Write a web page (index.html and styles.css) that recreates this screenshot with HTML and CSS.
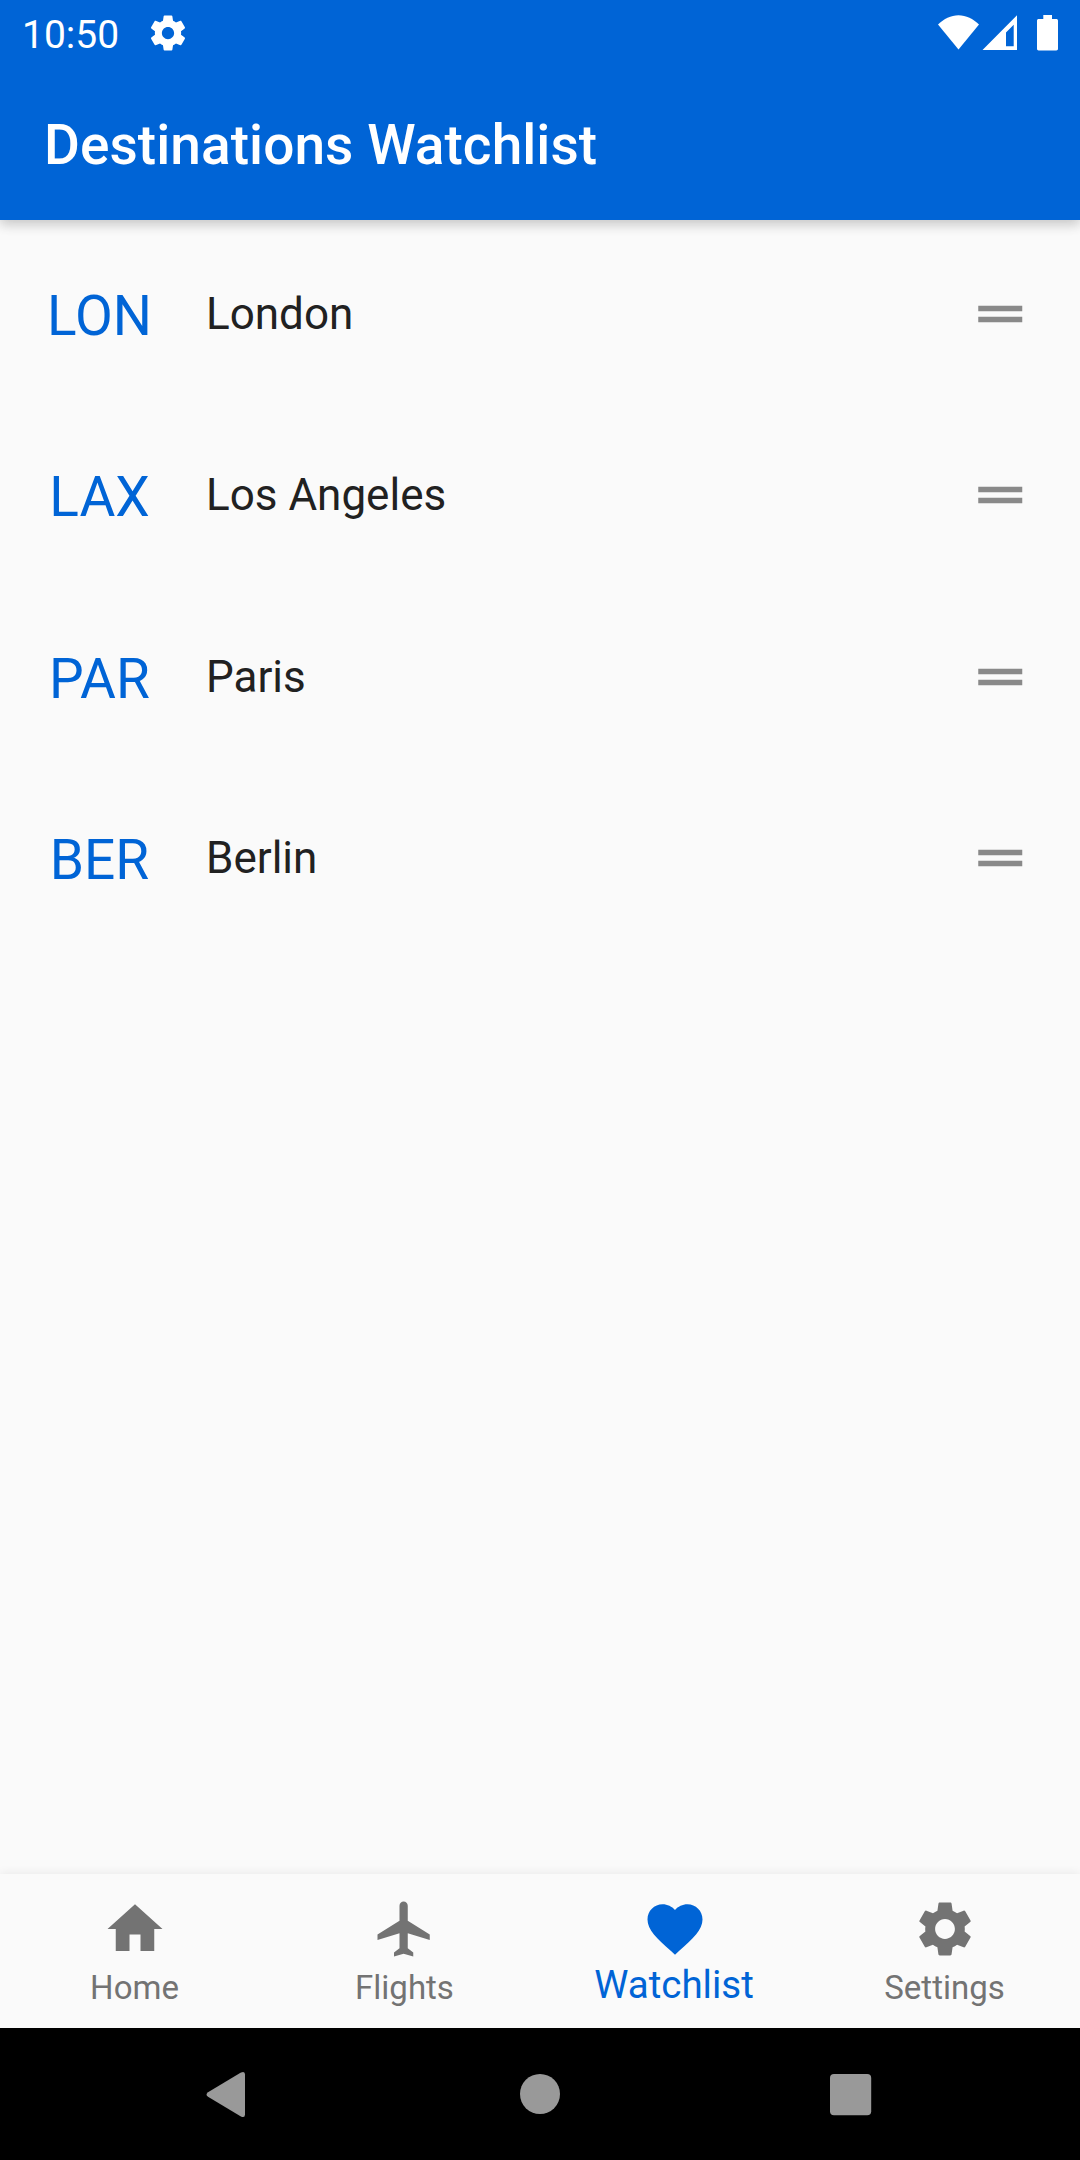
FILE: index.html
```html
<!DOCTYPE html>
<html lang="en">
<head>
<meta charset="utf-8">
<title>Destinations Watchlist</title>
<link rel="stylesheet" href="styles.css">
</head>
<body>
<div class="screen">
  <header class="header">
    <div class="status">
      <span class="time">10:50</span>
      <svg class="status-gear" viewBox="0 0 24 24"><path d="M19.43 12.98c.04-.32.07-.64.07-.98s-.03-.66-.07-.98l2.11-1.65c.19-.15.24-.42.12-.64l-2-3.46c-.12-.22-.39-.3-.61-.22l-2.49 1c-.52-.4-1.08-.73-1.69-.98l-.38-2.65C14.46 2.18 14.25 2 14 2h-4c-.25 0-.46.18-.49.42l-.38 2.65c-.61.25-1.17.59-1.69.98l-2.49-1c-.23-.09-.49 0-.61.22l-2 3.46c-.13.22-.07.49.12.64l2.11 1.65c-.04.32-.07.65-.07.98s.03.66.07.98l-2.11 1.65c-.19.15-.24.42-.12.64l2 3.46c.12.22.39.3.61.22l2.49-1c.52.4 1.08.73 1.69.98l.38 2.65c.03.24.24.42.49.42h4c.25 0 .46-.18.49-.42l.38-2.65c.61-.25 1.17-.59 1.69-.98l2.49 1c.23.09.49 0 .61-.22l2-3.46c.12-.22.07-.49-.12-.64l-2.11-1.65zM12 15.5c-1.93 0-3.5-1.57-3.5-3.5s1.57-3.5 3.5-3.5 3.5 1.57 3.5 3.5-1.57 3.5-3.5 3.5z"/></svg>
      <svg class="indicators" viewBox="0 0 120 36">
        <path d="M20.5 34.5 0 9.5C5.8 3.8 13 .2 20.5 .2S35.2 3.8 41 9.5z"/>
        <path fill-rule="evenodd" d="M44.5 35 79 .3V35zM68 17.5V31.3h7.7V9.7z"/>
        <path d="M105.3 0h8.7v4h4.3c1 0 1.7.7 1.7 1.7v28.1c0 1-.7 1.7-1.7 1.7h-17.6c-1 0-1.7-.7-1.7-1.7V5.7c0-1 .7-1.7 1.7-1.7h4.6z"/>
      </svg>
    </div>
    <h1 class="title">Destinations Watchlist</h1>
  </header>

  <main class="list">
    <div class="row"><span class="code">LON</span><span class="city">London</span><svg class="handle" viewBox="0 0 66 66"><path d="M11.25 24.75h44v5.5h-44zM11.25 35.75h44v5.5h-44z"/></svg></div>
    <div class="row"><span class="code">LAX</span><span class="city">Los Angeles</span><svg class="handle" viewBox="0 0 66 66"><path d="M11.25 24.75h44v5.5h-44zM11.25 35.75h44v5.5h-44z"/></svg></div>
    <div class="row"><span class="code">PAR</span><span class="city">Paris</span><svg class="handle" viewBox="0 0 66 66"><path d="M11.25 24.75h44v5.5h-44zM11.25 35.75h44v5.5h-44z"/></svg></div>
    <div class="row"><span class="code">BER</span><span class="city">Berlin</span><svg class="handle" viewBox="0 0 66 66"><path d="M11.25 24.75h44v5.5h-44zM11.25 35.75h44v5.5h-44z"/></svg></div>
  </main>

  <nav class="tabs">
    <div class="tab"><svg class="tab-icon" viewBox="0 0 24 24"><path d="M10 20v-6h4v6h5v-8h3L12 3 2 12h3v8z"/></svg><span class="label">Home</span></div>
    <div class="tab"><svg class="tab-icon" viewBox="0 0 24 24"><path d="M21 16v-2l-8-5V3.5c0-.83-.67-1.5-1.5-1.5S10 2.67 10 3.5V9l-8 5v2l8-2.5V19l-2 1.5V22l3.5-1 3.5 1v-1.5L13 19v-5.5l8 2.5z"/></svg><span class="label">Flights</span></div>
    <div class="tab active"><svg class="tab-icon" viewBox="0 0 24 24"><path d="M12 21.35l-1.45-1.32C5.4 15.36 2 12.28 2 8.5 2 5.42 4.42 3 7.5 3c1.74 0 3.41.81 4.5 2.09C13.09 3.81 14.76 3 16.5 3 19.58 3 22 5.42 22 8.5c0 3.78-3.4 6.86-8.55 11.54L12 21.35z"/></svg><span class="label">Watchlist</span></div>
    <div class="tab"><svg class="tab-icon" viewBox="0 0 24 24"><path d="M19.14 12.94c.04-.3.06-.61.06-.94 0-.32-.02-.64-.07-.94l2.03-1.58c.18-.14.23-.41.12-.61l-1.92-3.32c-.12-.22-.37-.29-.59-.22l-2.39.96c-.5-.38-1.03-.7-1.62-.94l-.36-2.54c-.04-.24-.24-.41-.48-.41h-3.84c-.24 0-.43.17-.47.41l-.36 2.54c-.59.24-1.13.57-1.62.94l-2.39-.96c-.22-.08-.47 0-.59.22L2.74 8.87c-.12.21-.08.47.12.61l2.03 1.58c-.05.3-.09.63-.09.94s.02.64.07.94l-2.03 1.58c-.18.14-.23.41-.12.61l1.92 3.32c.12.22.37.29.59.22l2.39-.96c.5.38 1.03.7 1.62.94l.36 2.54c.05.24.24.41.48.41h3.84c.24 0 .44-.17.47-.41l.36-2.54c.59-.24 1.13-.56 1.62-.94l2.39.96c.22.08.47 0 .59-.22l1.92-3.32c.12-.22.07-.47-.12-.61l-2.01-1.58zM12 15.6c-1.98 0-3.6-1.62-3.6-3.6s1.62-3.6 3.6-3.6 3.6 1.62 3.6 3.6-1.62 3.6-3.6 3.6z"/></svg><span class="label">Settings</span></div>
  </nav>

  <footer class="sysnav">
    <svg viewBox="0 0 80 80"><path d="M18 40.2 Q15 42.5 18 44.8 L50.5 64.2 Q55 66.5 55 62.5 V22.5 Q55 18.500 50.5 20.8Z"/></svg>
    <svg viewBox="0 0 80 80"><circle cx="40" cy="42" r="20"/></svg>
    <svg viewBox="0 0 80 80"><rect x="19" y="22" width="41.200" height="41.200" rx="4"/></svg>
  </footer>
</div>
</body>
</html>
```
FILE: styles.css
```css
* { box-sizing: border-box; }
body { margin: 0; font-family: Roboto, "Liberation Sans", sans-serif; }
svg { display: block; flex: none; fill: currentColor; }
.screen { width: 1080px; height: 2160px; display: flex; flex-direction: column; background: #fafafa; overflow: hidden; }

.header { height: 220px; background: #0064d6; color: #fff; box-shadow: 0 5px 11px rgba(0,0,0,.13), 0 2px 14px rgba(0,0,0,.11); }
.status { height: 66px; padding: 0 22px; display: flex; align-items: center; }
.time { width: 125px; font-size: 39px; line-height: 46px; padding-top: 3px; }
.status-gear { width: 42px; height: 42px; }
.indicators { width: 120px; height: 36px; margin-left: auto; }
.title { margin: 0; padding: 2px 44px 0; font-size: 55px; font-weight: 500; line-height: 154px; letter-spacing: .06px; }

.list { flex: 1; padding: 3px 47px 0 44px; }
.row { height: 181.5px; display: flex; align-items: center; }
.code { width: 110px; padding: 4px 0 0 1px; font-size: 55px; line-height: 64px; color: #0064d6; text-align: center; }
.city { flex: 1; margin-left: 52px; font-size: 44px; line-height: 52px; color: #212121; }
.handle { width: 66px; height: 66px; color: #898989; }

.tabs { height: 154px; display: flex; background: #fafafa; box-shadow: 0 -1px 9px rgba(0,0,0,.07); }
.tab { flex: 1; padding-top: 22px; display: flex; flex-direction: column; align-items: center; color: #737373; }
.tab-icon { width: 66px; height: 66px; }
.label { margin: 6px 1px 0 0; font-size: 33px; line-height: 40px; }
.active { color: #0064d6; }
.active .label { margin: 3px 2px 0 0; font-size: 38.5px; }

.sysnav { height: 132px; padding: 24px 189.5px 0; display: flex; justify-content: space-between; background: #000; color: #999; }
.sysnav svg { width: 80px; height: 80px; }
```
